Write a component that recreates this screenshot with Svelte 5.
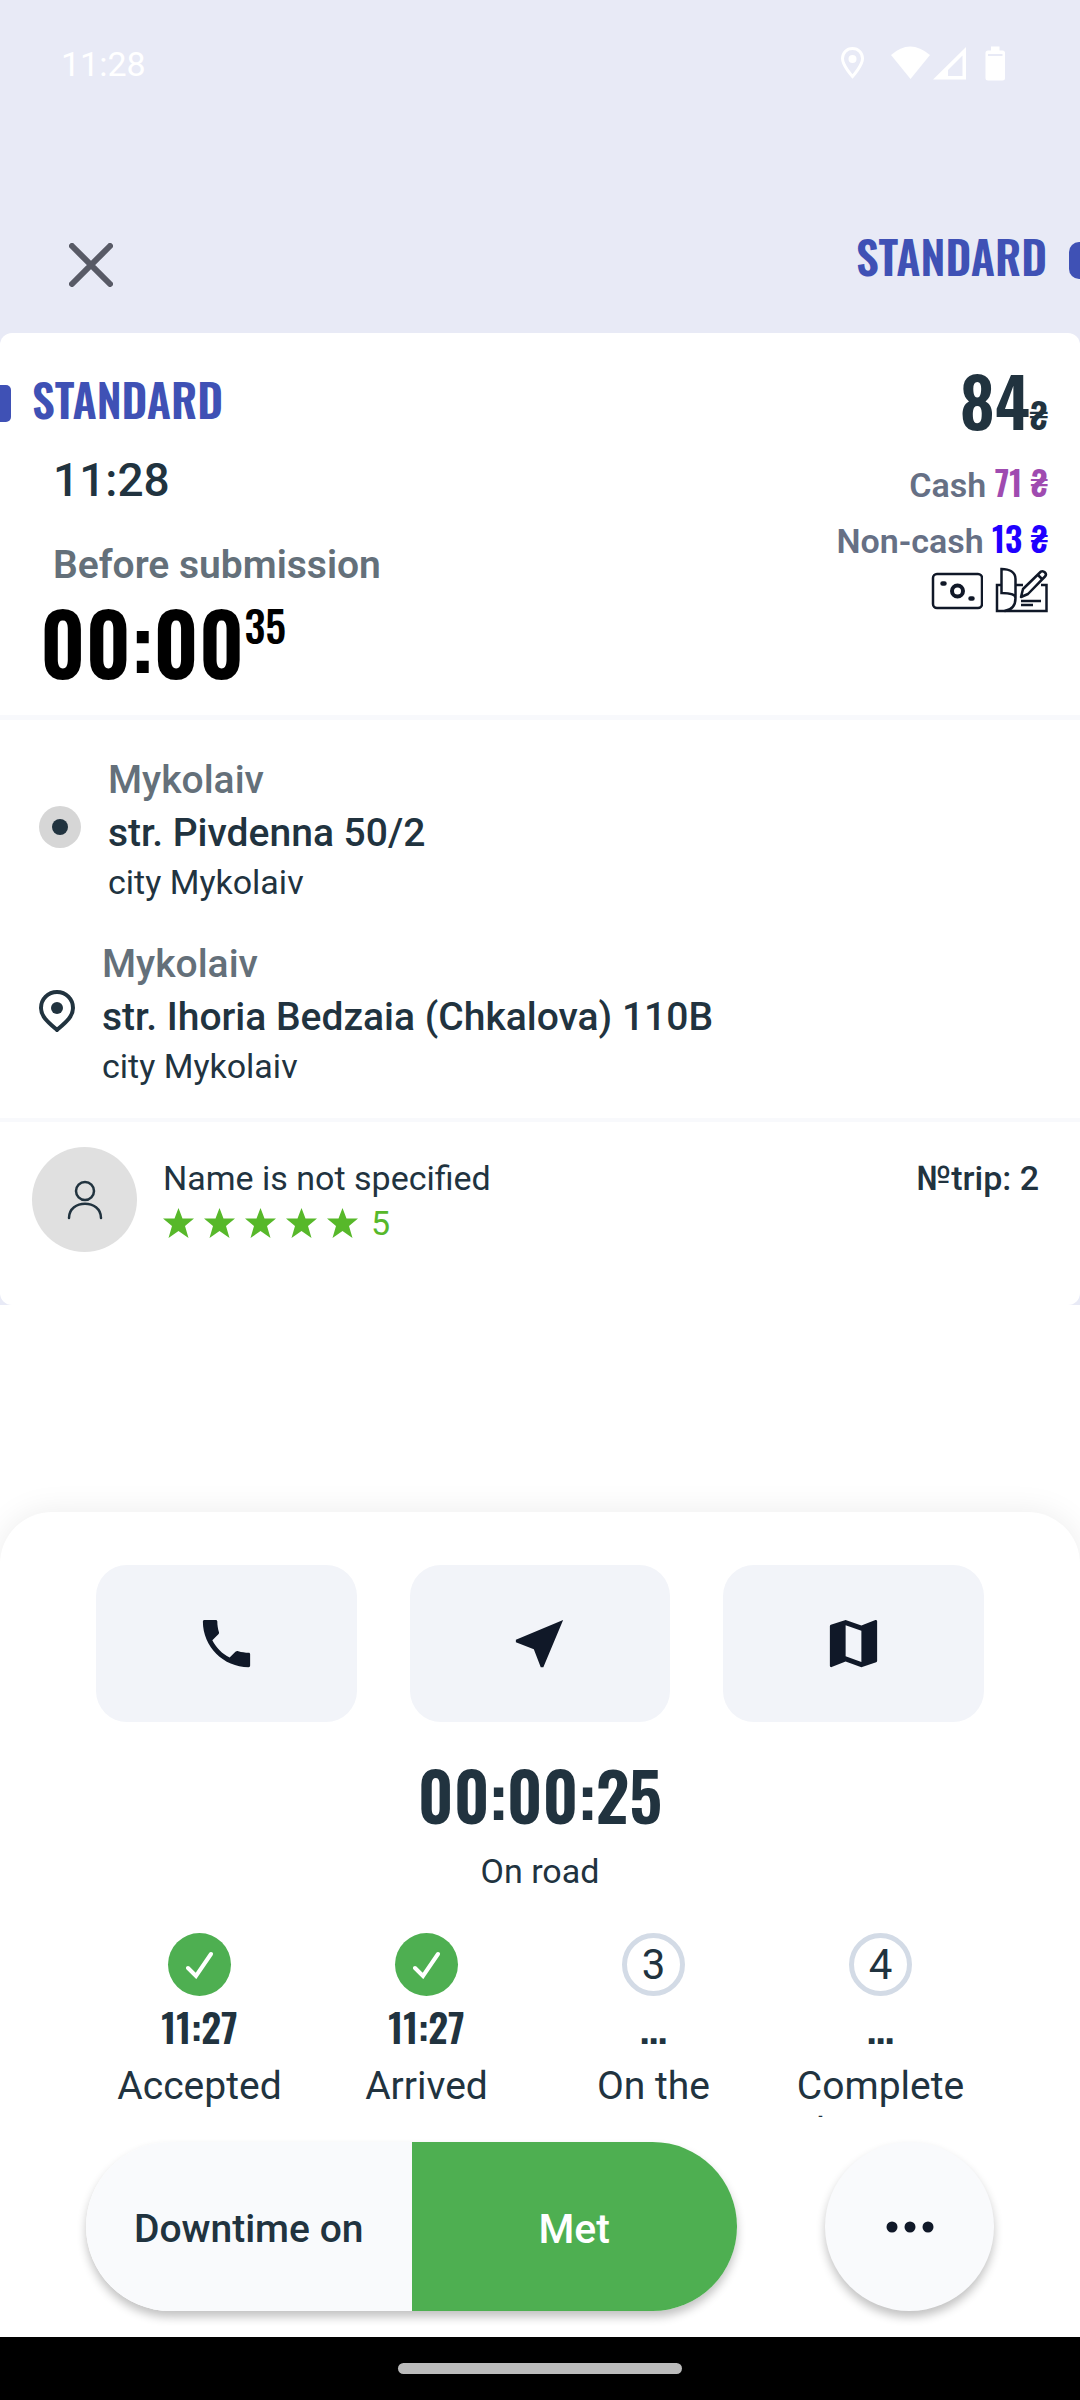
<script>
  const price = { total: 84, cash: 71, nonCash: 13 };

  const stops = [
    { kind: 'from', area: 'Mykolaiv', street: 'str. Pivdenna 50/2', city: 'city Mykolaiv' },
    { kind: 'to', area: 'Mykolaiv', street: 'str. Ihoria Bedzaia (Chkalova) 110B', city: 'city Mykolaiv' }
  ];

  const steps = [
    { label: 'Accepted', time: '11:27', done: true },
    { label: 'Arrived', time: '11:27', done: true },
    { label: 'On the way', time: '...', done: false },
    { label: 'Complete the route', time: '...', done: false }
  ];

  const rating = 5;
</script>

<div class="screen">
  <header class="top">
    <div class="status">
      <span class="clock">11:28</span>
      <svg class="status-icons" width="168" height="40" viewBox="0 0 168 40" aria-hidden="true">
        <path d="M12.500 4.500c-6 0-10 4.500-10 10 0 7 10 18 10 18s10-11 10-18c0-5.500-4-10-10-10z" fill="none" stroke="#fff" stroke-width="3" />
        <circle cx="12.500" cy="15" r="4" fill="#fff" />
        <path d="M51 11q19-17 39 0L70.500 35z" fill="#fff" />
        <path d="M93 35.500L126 3v32.500zM108 32h14.500V11.500L108 26z" fill="#fff" fill-rule="evenodd" />
        <path d="M151 2.500h8.500v4h3a2.500 2.500 0 0 1 2.500 2.500v25a2.500 2.500 0 0 1-2.500 2.500H148a2.500 2.500 0 0 1-2.500-2.500V9a2.500 2.500 0 0 1 2.500-2.500h3zM148 10v2h14.500v-2z" fill="#fff" fill-rule="evenodd" />
      </svg>
    </div>
    <div class="bar">
      <button class="close" aria-label="Close">
        <svg width="44" height="44" viewBox="0 0 44 44">
          <path d="M3 3l38 38M41 3L3 41" stroke="#585a66" stroke-width="6" stroke-linecap="round" />
        </svg>
      </button>
      <span class="tariff">STANDARD</span>
      <span class="tab tab-right"></span>
    </div>
  </header>

  <div class="card-wrap">
    <main class="card">
      <section class="summary">
        <div class="left">
          <div class="tariff-row">
            <span class="tab tab-left"></span>
            <h1 class="tariff">STANDARD</h1>
          </div>
          <time class="order-time">11:28</time>
          <p class="before">Before submission</p>
          <div class="countdown">00:00<sup>35</sup></div>
        </div>
        <div class="right">
          <div class="total">{price.total}<small>₴</small></div>
          <div class="part">Cash <b class="cash">{price.cash} ₴</b></div>
          <div class="part">Non-cash <b class="non-cash">{price.nonCash} ₴</b></div>
          <div class="pay-icons">
            <svg width="52" height="46" viewBox="0 0 52 46" fill="none" stroke="#101828" aria-hidden="true">
              <rect x="2" y="7" width="49" height="34" rx="4" stroke-width="2.500" />
              <circle cx="26.500" cy="24" r="5.500" stroke-width="4" />
              <path d="M11.500 16.500h2M39.500 31.500h2" stroke-width="4.500" stroke-linecap="round" />
            </svg>
            <svg width="53" height="46" viewBox="0 0 53 46" fill="none" stroke="#101828" stroke-width="2.500" aria-hidden="true">
              <path d="M6 18H2v26h49.500V18H46M20 18h8" />
              <path d="M6.500 26V2C14 2 20.500 5 20.500 12v19c0-4-6-5-14-5z" />
              <path d="M20.500 31c0 8-4 12-11 13" />
              <path d="M26 30l2-8L46 4.500q2-1 4 1t0 4L33 27z" stroke-linejoin="round" />
              <path d="M43 8l4 4M26 34h20M26 38h12" />
            </svg>
          </div>
        </div>
      </section>

      <section class="route">
        {#each stops as stop}
          <div class="stop">
            {#if stop.kind === 'from'}
              <svg width="42" height="42" viewBox="0 0 42 42" aria-hidden="true">
                <circle cx="21" cy="21" r="21" fill="#d6d6d6" />
                <circle cx="21" cy="21" r="8" fill="#21333f" />
              </svg>
            {:else}
              <svg width="36" height="42" viewBox="0 0 36 42" aria-hidden="true">
                <path d="M18 2C9 2 2 9 2 18c0 9 8 15 16 22 8-7 16-13 16-22C34 9 27 2 18 2z" fill="none" stroke="#21333f" stroke-width="4" />
                <circle cx="18" cy="18" r="6" fill="#21333f" />
              </svg>
            {/if}
            <div>
              <p class="area">{stop.area}</p>
              <p class="street">{stop.street}</p>
              <p class="city">{stop.city}</p>
            </div>
          </div>
        {/each}
      </section>

      <section class="client">
        <div class="avatar">
          <svg width="36" height="40" viewBox="0 0 36 40" fill="none" stroke="#21333f" stroke-width="2.500" stroke-linecap="round" aria-hidden="true">
            <circle cx="18" cy="11" r="9" />
            <path d="M2 38C2 19 34 19 34 38" />
          </svg>
        </div>
        <div class="client-info">
          <p>Name is not specified</p>
          <div class="rating">
            {#each { length: rating } as _}
              <svg width="31" height="30" viewBox="0 0 31 30" aria-hidden="true">
                <path d="M15.500 0l4 10.500H31l-9 7.500 3.500 12-10-7-10 7L9 18l-9-7.500h11.500z" fill="#57b82a" />
              </svg>
            {/each}
            <span>{rating}</span>
          </div>
        </div>
        <span class="trip">№trip: 2</span>
      </section>
    </main>
  </div>

  <section class="sheet">
    <div class="tools">
      <button aria-label="Call">
        <svg width="63" height="63" viewBox="0 0 24 24"><path d="M20.500 15.500c-1.400 0-2.700-.2-4-.57-.4-.1-.8-.03-1.100.24l-2.200 2.200c-2.830-1.440-5.150-3.750-6.590-6.590l2.300-2.300c.24-.24.3-.6.2-.9C8.700 6.300 8.500 5 8.500 3.600c0-.35-.25-.6-.6-.6H3.600c-.35 0-.6.25-.6.6C3 13.200 10.800 21 20.400 21c.35 0 .6-.25.6-.6v-4.300c0-.35-.2-.6-.5-.6z" /></svg>
      </button>
      <button aria-label="Navigate">
        <svg width="63" height="63" viewBox="0 0 24 24"><path d="M21 3L3 10.530v.98l6.840 2.650L12.480 21h.98z" /></svg>
      </button>
      <button aria-label="Map">
        <svg width="63" height="63" viewBox="0 0 24 24"><path d="M20.500 3l-.16.030L15 5.100 9 3 3.360 4.900c-.21.070-.36.250-.36.480V20.500c0 .28.220.5.500.5l.16-.03L9 18.900l6 2.100 5.640-1.900c.21-.07.36-.25.36-.48V3.500c0-.28-.22-.5-.5-.5zM15 19l-6-2.110V5l6 2.110V19z" /></svg>
      </button>
    </div>

    <div class="timer">00:00:25</div>
    <p class="state">On road</p>

    <ol class="steps">
      {#each steps as step, i}
        <li>
          {#if step.done}
            <span class="mark done">
              <svg width="28" height="28" viewBox="0 0 28 28" fill="none" aria-hidden="true">
                <path d="M2 17l8 8L25 3" stroke="#fff" stroke-width="4" stroke-linecap="round" />
              </svg>
            </span>
          {:else}
            <span class="mark">{i + 1}</span>
          {/if}
          <span class="step-time">{step.time}</span>
          <span class="step-label">{step.label}</span>
        </li>
      {/each}
    </ol>

    <div class="actions">
      <div class="pill">
        <button class="downtime">Downtime on</button>
        <button class="met">Met</button>
      </div>
      <button class="more" aria-label="More">
        <svg width="48" height="12" viewBox="0 0 48 12" fill="#101828">
          <circle cx="6" cy="6" r="5.500" />
          <circle cx="24" cy="6" r="5.500" />
          <circle cx="42" cy="6" r="5.500" />
        </svg>
      </button>
    </div>
  </section>

  <footer class="nav-bar"><span></span></footer>
</div>

<style>
  :global(body) {
    margin: 0;
    background: #fff;
  }

  .screen {
    --ink: #21333f;
    --blue: #3f51b5;
    --green: #4eaf51;
    --condensed: Oswald, "Roboto Condensed", "Liberation Sans Narrow", sans-serif;
    display: flex;
    flex-direction: column;
    min-height: 100vh;
    overflow: hidden;
    font-family: Roboto, sans-serif;
    font-size: 34px;
    line-height: 40px;
    color: var(--ink);
  }

  h1, p, ol {
    margin: 0;
    padding: 0;
  }

  button {
    padding: 0;
    border: 0;
    background: none;
    font: inherit;
    color: inherit;
  }

  svg {
    display: block;
    flex: none;
  }

  .top, .card-wrap {
    background: #e8eaf6;
  }

  .status {
    display: flex;
    justify-content: space-between;
    align-items: center;
    padding: 44px 72px 0 61px;
  }

  .clock {
    font-weight: 400;
    color: #fff;
  }

  .bar {
    display: flex;
    align-items: center;
    padding: 140px 0 37px 69px;
  }

  .bar .tariff {
    margin: 0 0 8px auto;
  }

  .close {
    margin-top: 10px;
  }

  .tariff {
    font-family: var(--condensed);
    font-size: 45px;
    line-height: 64px;
    font-weight: 600;
    color: var(--blue);
  }

  .tab {
    width: 11px;
    height: 37px;
    background: var(--blue);
  }

  .tab-right {
    margin-left: 22px;
    border-radius: 10px 0 0 10px;
  }

  .tab-left {
    margin: 8px 21px 0 0;
    border-radius: 0 5px 5px 0;
  }

  .card {
    background: #fff;
    border-radius: 12px;
  }

  .summary {
    display: flex;
    justify-content: space-between;
    padding-bottom: 22px;
    border-bottom: 5px solid #f8f9fc;
  }

  .left {
    display: flex;
    flex-direction: column;
    padding-top: 34px;
  }

  .tariff-row {
    display: flex;
    align-items: center;
  }

  .order-time {
    margin: 22px 0 0 53px;
    font-size: 46px;
    line-height: 54px;
    font-weight: 500;
  }

  .before {
    margin: 35px 0 0 53px;
    font-size: 39px;
    line-height: 46px;
    font-weight: 600;
    color: #64707a;
  }

  .countdown {
    display: flex;
    align-items: flex-start;
    margin-left: 40px;
    padding-top: 1px;
    font-family: var(--condensed);
    font-size: 84px;
    line-height: 104px;
    font-weight: 600;
    color: #000;
  }

  .countdown sup {
    font-size: 42px;
    line-height: 72px;
    font-weight: 500;
  }

  .right {
    display: flex;
    flex-direction: column;
    align-items: flex-end;
    padding: 30px 32px 0 0;
  }

  .total {
    font-family: var(--condensed);
    font-size: 68px;
    line-height: 74px;
    font-weight: 600;
  }

  .total small {
    font-size: 36px;
  }

  .part {
    margin-top: 9px;
    font-weight: 600;
    line-height: 44px;
    color: #667085;
  }

  .part b {
    font-family: var(--condensed);
    font-size: 34px;
    font-weight: 600;
  }

  .cash {
    color: #9f4bb0;
  }

  .non-cash {
    color: #1f00ff;
  }

  .pay-icons {
    display: flex;
    gap: 12px;
    padding-top: 4px;
  }

  .route {
    display: flex;
    flex-direction: column;
    gap: 38px;
    padding: 37px 39px 31px;
    border-bottom: 4px solid #f8f9fc;
  }

  .stop {
    display: flex;
    align-items: center;
    gap: 27px;
  }

  .stop svg {
    margin-bottom: 6px;
  }

  .area, .street {
    font-size: 39px;
    line-height: 46px;
    font-weight: 500;
  }

  .area {
    margin-bottom: 7px;
    color: #64707a;
  }

  .city {
    margin-top: 6px;
    padding-bottom: 1px;
  }

  .client {
    display: flex;
    align-items: flex-start;
    padding: 25px 41px 53px 32px;
  }

  .avatar {
    display: flex;
    align-items: center;
    justify-content: center;
    width: 105px;
    height: 105px;
    margin-right: 26px;
    border-radius: 50%;
    background: #e0e0e0;
  }

  .client-info, .trip {
    padding-top: 11px;
  }

  .trip {
    margin-left: auto;
    font-weight: 500;
  }

  .rating {
    display: flex;
    align-items: center;
    gap: 10px;
    padding-top: 5px;
    color: #57b82a;
  }

  .rating span {
    margin-left: 3px;
  }

  .sheet {
    flex: 1;
    display: flex;
    flex-direction: column;
    margin-top: 207px;
    padding: 53px 86px 26px;
    border-radius: 52px 52px 0 0;
    background: #fff;
    box-shadow: 0 0 32px rgba(0, 0, 0, 0.08);
  }

  .tools {
    display: grid;
    grid-template-columns: repeat(3, 1fr);
    gap: 53px;
    padding: 0 10px;
  }

  .tools button {
    display: flex;
    align-items: center;
    justify-content: center;
    height: 157px;
    border-radius: 31px;
    background: #f2f4f9;
  }

  .tools svg {
    fill: #101828;
  }

  .timer {
    margin-top: 30px;
    font-family: var(--condensed);
    font-size: 66px;
    line-height: 84px;
    font-weight: 600;
    text-align: center;
  }

  .state {
    margin-top: 15px;
    text-align: center;
  }

  .steps {
    display: grid;
    grid-template-columns: repeat(4, 1fr);
    height: 184px;
    margin-top: 42px;
    overflow: hidden;
    list-style: none;
    font-size: 39px;
    line-height: 46px;
    text-align: center;
  }

  .steps li {
    display: flex;
    flex-direction: column;
    align-items: center;
  }

  .mark {
    display: flex;
    align-items: center;
    justify-content: center;
    box-sizing: border-box;
    width: 63px;
    height: 63px;
    border: 5px solid #d3dbe6;
    border-radius: 50%;
    font-size: 42px;
  }

  .done {
    border: 0;
    background: var(--green);
  }

  .step-time {
    margin-top: 4px;
    font-family: var(--condensed);
    font-weight: 600;
    line-height: 52px;
  }

  .step-label {
    max-width: 180px;
    margin-top: 11px;
  }

  .actions {
    display: flex;
    justify-content: space-between;
    margin-top: 25px;
  }

  .pill {
    display: flex;
    flex: 0 1 651px;
    height: 169px;
    border-radius: 85px;
    overflow: hidden;
    font-size: 39px;
    font-weight: 500;
    box-shadow: 0 6px 10px rgba(0, 0, 0, 0.24);
  }

  .pill button {
    flex: 1;
    padding-top: 5px;
  }

  .downtime, .more {
    background: #f9fafc;
  }

  .pill .met {
    font-size: 41px;
    color: #fff;
    background: var(--green);
  }

  .more {
    display: flex;
    align-items: center;
    justify-content: center;
    width: 169px;
    height: 169px;
    border-radius: 50%;
    box-shadow: 0 6px 10px rgba(0, 0, 0, 0.24);
  }

  .nav-bar {
    display: flex;
    align-items: center;
    justify-content: center;
    height: 63px;
    background: #000;
  }

  .nav-bar span {
    width: 284px;
    height: 11px;
    border-radius: 6px;
    background: #bbb;
  }
</style>
